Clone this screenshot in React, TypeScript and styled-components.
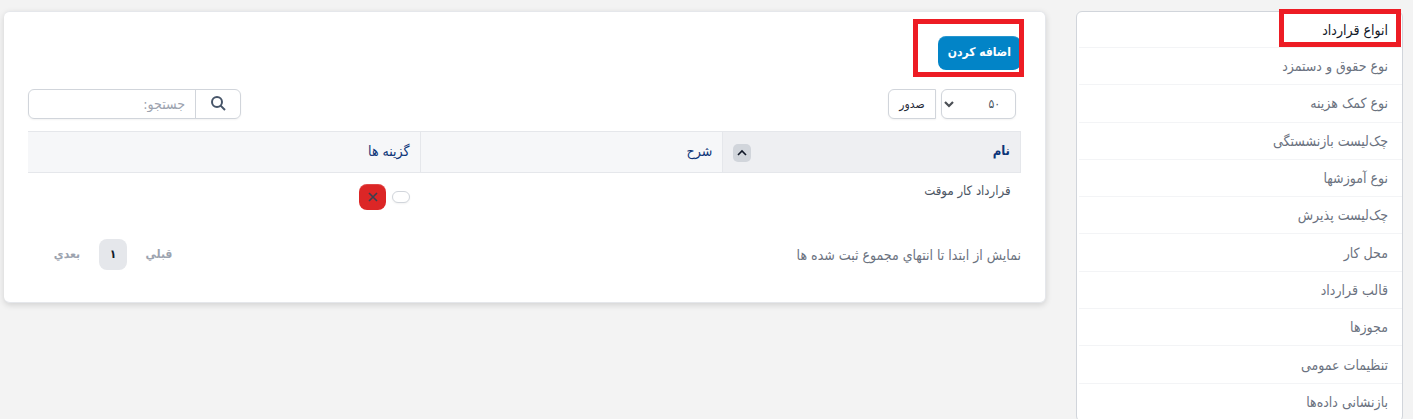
import React from "react";
import styled, { createGlobalStyle } from "styled-components";

const GlobalStyle = createGlobalStyle`
  * { box-sizing: border-box; }
  body {
    margin: 0;
    background: #f3f3f3;
    color: #4b5563;
    font-family: "DejaVu Sans Condensed", "DejaVu Sans", sans-serif;
    font-size: 14px;
    line-height: 20px;
  }
  button, input, select { font: inherit; color: inherit; margin: 0; }
`;

const Page = styled.div`
  display: grid;
  grid-template-columns: 327px minmax(0, 1fr);
  align-items: start;
  gap: 30px;
  padding: 11px 10px 0 4px;
`;

const Menu = styled.ul`
  display: flex;
  flex-direction: column;
  min-height: 411px;
  margin: 0;
  padding: 0 0 0 2px;
  list-style: none;
  background: #fff;
  border: 1px solid #d1d5db;
  border-radius: 6px;
`;

const MenuItem = styled.li`
  position: relative;
  display: flex;
  flex: 1 0 36px;
  border-bottom: 1px solid #f3f4f6;
  &:first-child { flex: 0 0 36px; }
  &:last-child { border-bottom: 0; }
`;

const MenuLink = styled.a<{ $active?: boolean }>`
  display: flex;
  flex: 1;
  align-items: center;
  padding: 0 14px;
  color: ${(p) => (p.$active ? "#111827" : "#6b7280")};
  text-decoration: none;
`;

const Highlight = styled.span<{ $inset: string }>`
  position: absolute;
  inset: ${(p) => p.$inset};
  border: 5px solid #ed1c24;
  pointer-events: none;
`;

const Card = styled.main`
  padding: 24px;
  padding-bottom: 32px;
  background: #fff;
  border: 1px solid #e5e7eb;
  border-width: 1px 1px 1px 0;
  border-radius: 6px;
  box-shadow: 0 2px 6px rgba(0, 0, 0, 0.14);
`;

const AddWrap = styled.div`
  position: relative;
  width: fit-content;
`;

const AddButton = styled.button`
  display: block;
  height: 34px;
  min-width: 83px;
  padding: 0 10px 2px;
  border: 0;
  border-radius: 8px;
  background: #0284c7;
  box-shadow: inset 0 1px 0 rgba(255, 255, 255, 0.15);
  color: #fff;
  font-size: 12px;
  font-weight: 700;
`;

const Toolbar = styled.div`
  display: flex;
  justify-content: space-between;
  margin: 19px 0 12px;
  font-size: 12px;
`;

const ToolGroup = styled.div`
  display: flex;
  gap: 5px;
  padding-right: 5px;
`;

const SelectWrap = styled.div`
  position: relative;
  width: 75px;
  svg {
    position: absolute;
    left: 3px;
    top: 10px;
    pointer-events: none;
  }
`;

const Select = styled.select`
  width: 100%;
  height: 30px;
  padding: 0 15px;
  appearance: none;
  background: #fff;
  border: 1px solid #d1d5db;
  border-radius: 6px;
  box-shadow: 0 1px 2px rgba(0, 0, 0, 0.05);
`;

const ExportButton = styled.button`
  width: 48px;
  height: 30px;
  padding: 0;
  background: #fff;
  border: 1px solid #d1d5db;
  border-radius: 6px 0 0 6px;
  box-shadow: 0 1px 2px rgba(0, 0, 0, 0.05);
  color: #1f2937;
`;

const Search = styled.form`
  display: flex;
  width: 213px;
  height: 30px;
  border: 1px solid #d1d5db;
  border-radius: 6px;
  box-shadow: 0 1px 2px rgba(0, 0, 0, 0.05);
`;

const SearchButton = styled.button`
  display: grid;
  place-items: center;
  width: 45px;
  padding: 0 0 2px;
  background: none;
  border: 0;
  border-left: 1px solid #d1d5db;
  color: #475569;
`;

const SearchInput = styled.input`
  flex: 1;
  min-width: 0;
  padding: 0 10px;
  background: none;
  border: 0;
  font-size: 14px;
  &::placeholder { color: #9ca3af; opacity: 1; }
`;

const Table = styled.table`
  width: 100%;
  border-collapse: collapse;
  table-layout: fixed;
`;

const Th = styled.th<{ $sorted?: boolean; $width: string }>`
  width: ${(p) => p.$width};
  height: 41px;
  padding: 0 10px 2px;
  text-align: right;
  font-weight: ${(p) => (p.$sorted ? 700 : 400)};
  color: #0c3478;
  background: ${(p) => (p.$sorted ? "#eeeff2" : "#f6f7f9")};
  border: 1px solid #e5e7eb;
  &:last-child { border-left: 0; }
`;

const HeadContent = styled.div`
  display: flex;
  align-items: center;
  justify-content: space-between;
  font-size: 13px;
`;

const SortButton = styled.button`
  display: grid;
  place-items: center;
  width: 18px;
  height: 18px;
  margin-top: 4px;
  padding: 0;
  border: 0;
  border-radius: 5px;
  background: #d1d5db;
  color: #111827;
`;

const Td = styled.td`
  padding: 8px 10px;
  vertical-align: top;
  font-size: 13px;
`;

const Actions = styled.div`
  display: flex;
  align-items: center;
  gap: 6px;
  padding: 3px 0;
`;

const EmptyButton = styled.button`
  width: 18px;
  height: 12px;
  padding: 0;
  background: #fff;
  border: 1px solid #d1d5db;
  border-radius: 6px;
  box-shadow: 0 1px 2px rgba(0, 0, 0, 0.05);
`;

const DeleteButton = styled.button`
  display: grid;
  place-items: center;
  width: 27px;
  height: 26px;
  padding: 0;
  border: 0;
  border-radius: 8px;
  background: #dc2626;
  box-shadow: inset 0 1px 0 rgba(255, 255, 255, 0.15);
  color: #374151;
`;

const Footer = styled.footer`
  display: flex;
  align-items: center;
  justify-content: space-between;
  margin-top: 18px;
  color: #6b7280;
`;

const Pager = styled.nav`
  display: flex;
  align-items: center;
  gap: 18px;
  padding-left: 25px;
`;

const PageButton = styled.button<{ $current?: boolean }>`
  height: 31px;
  min-width: 28px;
  padding: 0 0 2px;
  border: 0;
  border-radius: 8px;
  background: ${(p) => (p.$current ? "#e5e7eb" : "none")};
  color: ${(p) => (p.$current ? "#111827" : "#9ca3af")};
  font-size: 12px;
  font-weight: 700;
`;

const menuItems = [
  "انواع قرارداد",
  "نوع حقوق و دستمزد",
  "نوع کمک هزینه",
  "چک‌لیست بازنشستگی",
  "نوع آموزشها",
  "چک‌لیست پذیرش",
  "محل کار",
  "قالب قرارداد",
  "مجوزها",
  "تنظیمات عمومی",
  "بازنشانی داده‌ها",
];

export default function App() {
  return (
    <>
      <GlobalStyle />
      <Page dir="rtl" lang="fa">
        <nav>
          <Menu>
            {menuItems.map((label, i) => (
              <MenuItem key={label}>
                <MenuLink href="#" $active={i === 0}>{label}</MenuLink>
                {i === 0 && <Highlight $inset="-3px 1px 0 200px" />}
              </MenuItem>
            ))}
          </Menu>
        </nav>
        <Card>
          <AddWrap>
            <AddButton type="button">اضافه کردن</AddButton>
            <Highlight $inset="-17px -3px -7px -25px" />
          </AddWrap>
          <Toolbar>
            <ToolGroup>
              <SelectWrap>
                <Select aria-label="تعداد ردیف" defaultValue="50">
                  <option value="50">۵۰</option>
                  <option value="100">۱۰۰</option>
                </Select>
                <svg width="10" height="10" viewBox="0 0 10 10" fill="none" stroke="#4b4f55" strokeWidth="2.2">
                  <path d="M1 3l4 4 4-4" />
                </svg>
              </SelectWrap>
              <ExportButton type="button">صدور</ExportButton>
            </ToolGroup>
            <Search>
              <SearchButton type="button" aria-label="جستجو">
                <svg width="15" height="15" viewBox="0 0 15 15" fill="none" stroke="currentColor" strokeWidth="2">
                  <circle cx="6" cy="6" r="5" />
                  <path d="M9.6 9.6l4.4 4.4" />
                </svg>
              </SearchButton>
              <SearchInput aria-label="جستجو" placeholder="جستجو:" />
            </Search>
          </Toolbar>
          <Table>
            <thead>
              <tr>
                <Th $sorted $width="30%">
                  <HeadContent>
                    نام
                    <SortButton type="button" aria-label="مرتب سازی">
                      <svg width="10" height="10" viewBox="0 0 10 10" fill="none" stroke="currentColor" strokeWidth="1.6">
                        <path d="M1 7l4-4 4 4" />
                      </svg>
                    </SortButton>
                  </HeadContent>
                </Th>
                <Th $width="30.5%">شرح</Th>
                <Th $width="39.5%">گزینه ها</Th>
              </tr>
            </thead>
            <tbody>
              <tr>
                <Td>قرارداد کار موقت</Td>
                <Td />
                <Td>
                  <Actions>
                    <EmptyButton type="button" aria-label="ویرایش" />
                    <DeleteButton type="button" aria-label="حذف">
                      <svg width="10" height="10" viewBox="0 0 10 10" fill="none" stroke="currentColor" strokeWidth="1.6">
                        <path d="M1 1l8 8M9 1l-8 8" />
                      </svg>
                    </DeleteButton>
                  </Actions>
                </Td>
              </tr>
            </tbody>
          </Table>
          <Footer>
            <span>نمايش از ابتدا تا انتهاي مجموع ثبت شده ها</span>
            <Pager>
              <PageButton type="button">قبلي</PageButton>
              <PageButton type="button" $current>۱</PageButton>
              <PageButton type="button">بعدي</PageButton>
            </Pager>
          </Footer>
        </Card>
      </Page>
    </>
  );
}
